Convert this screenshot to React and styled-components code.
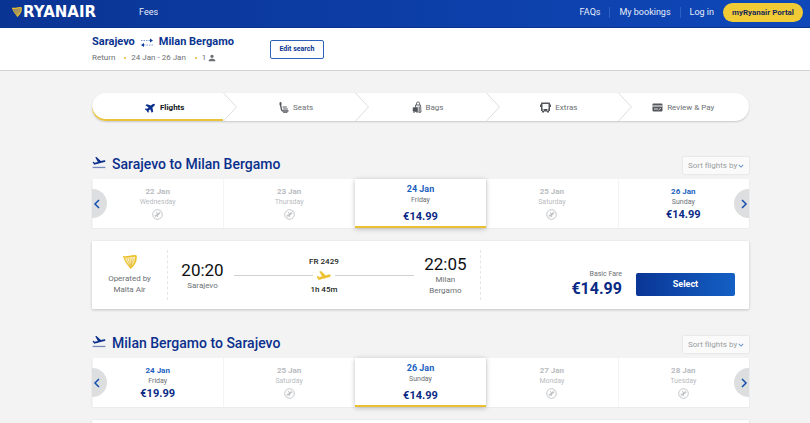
import React from "react";
import styled, { createGlobalStyle } from "styled-components";
import { MdKeyboardArrowDown, MdPerson } from "react-icons/md";
import { FaPlane } from "react-icons/fa";

const outboundDays = [
  { date: "22 Jan", weekday: "Wednesday" },
  { date: "23 Jan", weekday: "Thursday" },
  { date: "24 Jan", weekday: "Friday", price: "€14.99", selected: true },
  { date: "25 Jan", weekday: "Saturday" },
  { date: "26 Jan", weekday: "Sunday", price: "€14.99" },
];

const returnDays = [
  { date: "24 Jan", weekday: "Friday", price: "€19.99" },
  { date: "25 Jan", weekday: "Saturday" },
  { date: "26 Jan", weekday: "Sunday", price: "€14.99", selected: true },
  { date: "27 Jan", weekday: "Monday" },
  { date: "28 Jan", weekday: "Tuesday" },
];

const planePath =
  "M22.070 9.640c-.21-.8-1.040-1.280-1.840-1.060L14.920 10l-6.900-6.430-1.930.51 4.140 7.170-4.970 1.330-1.970-1.540-1.450.39 2.590 4.490s7.120-1.900 16.570-4.430c.81-.23 1.280-1.050 1.070-1.850z";

const steps = [
  { label: "Flights", icon: <TiltedPlane size={11} /> },
  { label: "Seats", icon: <SeatIcon /> },
  { label: "Bags", icon: <BagIcon /> },
  { label: "Extras", icon: <BusIcon /> },
  { label: "Review & Pay", icon: <CardIcon /> },
];

function TiltedPlane({ size }) {
  return (
    <svg width={size} height={size} viewBox="0 0 24 24">
      <g transform="rotate(-40 12 12)">
        <FaPlane size={24} />
      </g>
    </svg>
  );
}

function HarpIcon({ size, light }) {
  return (
    <svg width={size} height={size} viewBox="0 0 26 26" fill="none">
      <path d="M2 4c6 1 15-3 22-1 1 8-4 16-10 21C10 18 4 11 2 4z" fill={light ? "#fbeeb8" : "#8d8a72"} />
      <path
        d="M1 3c6 3 15-3 23-1 1 9-4 17-10 22"
        stroke="#edc02c"
        strokeWidth="3"
        strokeLinecap="round"
      />
      <path d="M2 5c2 7 7 13 12 19" stroke="#edc02c" strokeWidth="2.4" />
      <path d="M7 6l7 16M12 5l2 15M17 5l-2 15M21 6l-6 14" stroke="#dfb227" strokeWidth="1.1" />
    </svg>
  );
}

function SwapIcon() {
  return (
    <svg width="14" height="9" viewBox="0 0 28 18" fill="none" stroke="#5b80c8" strokeWidth="1.6">
      <path d="M2 5h18" strokeDasharray="3 2" />
      <path d="M8 14h18" strokeDasharray="3 2" />
      <path d="M20 1l6 4-6 4zM8 10l-6 4 6 4z" fill="#0a3a9c" stroke="none" />
    </svg>
  );
}

function TakeoffIcon() {
  return (
    <svg width="14" height="14" viewBox="1 2 22 22" fill="currentColor">
      <path d={planePath} />
      <path d="M2 19h20v2H2z" opacity="0.55" />
    </svg>
  );
}

function SeatIcon() {
  return (
    <svg width="10" height="11" viewBox="0 0 20 22" fill="none" stroke="currentColor" strokeLinecap="round">
      <path d="M3 2v3" strokeWidth="4" />
      <path d="M3 6l2 9c.4 2 1 3 3 3h10" strokeWidth="2.600" />
      <path d="M8 10h7M9 14h8" strokeWidth="2" />
      <path d="M9 21h7" strokeWidth="1.600" />
    </svg>
  );
}

function BagIcon() {
  return (
    <svg width="10" height="12" viewBox="0 0 20 24" fill="none" stroke="currentColor">
      <path d="M9 8V4c0-3 6-3 6 0v4" strokeWidth="1.600" />
      <path d="M7 8h10l1 14H8z" strokeWidth="1.800" fill="#fff" />
      <rect x="2" y="13" width="9" height="8" rx="1" fill="currentColor" />
      <path d="M12 11v10M15 11v10" strokeWidth="1.400" />
      <path d="M4 22v2M16 22v2" strokeWidth="2" />
    </svg>
  );
}

function BusIcon() {
  return (
    <svg width="11" height="11" viewBox="0 0 22 22" fill="currentColor">
      <path
        fillRule="evenodd"
        d="M4 1h14c1.500 0 2 1 2 2v15h-2v3h-4v-2H8v2H4v-3H2V3c0-1 .5-2 2-2zM5 4v10h12V4z"
      />
      <path d="M0 5h2v5H0zM20 5h2v5h-2z" />
      <path d="M5 15h3v2H5zM14 15h3v2h-3z" fill="#fff" />
    </svg>
  );
}

function CardIcon() {
  return (
    <svg width="11" height="9" viewBox="0 0 22 18">
      <rect x="1" y="1" width="20" height="16" rx="2" fill="currentColor" />
      <path d="M1 6h20" stroke="#fff" strokeWidth="2" />
      <path d="M4 12h8" stroke="#fff" strokeWidth="1.600" />
      <path d="M13 14l5-4" stroke="#fff" strokeWidth="1.400" />
    </svg>
  );
}

function NoFlightIcon() {
  return (
    <svg width="11" height="11" viewBox="0 0 22 22" fill="none" stroke="#b4b7ba">
      <circle cx="11" cy="11" r="9.600" strokeWidth="1.600" />
      <path d="M6 13l10-4M9 7l3 4-1 4M7 16l8-10" strokeWidth="1.800" strokeLinecap="round" />
    </svg>
  );
}

function PlaneIcon() {
  return (
    <svg width="14" height="9" viewBox="2 3 21 13.500">
      <path d={planePath} fill="#ecc12f" stroke="#ecc12f" />
    </svg>
  );
}

function ArrowIcon({ flip }) {
  return (
    <svg width="8" height="12" viewBox="0 0 8 12" fill="none" stroke="#1450b0" strokeWidth="1.500">
      <path d={flip ? "M2 2l4 4-4 4" : "M6 2L2 6l4 4"} />
    </svg>
  );
}

function DayPicker({ days }) {
  return (
    <Days>
      {days.map((day) => (
        <Day key={day.date} $selected={day.selected} disabled={!day.price}>
          <DayDate>{day.date}</DayDate>
          <Weekday>{day.weekday}</Weekday>
          <DayFare>{day.price || <NoFlightIcon />}</DayFare>
        </Day>
      ))}
      <Pager aria-label="Earlier dates">
        <ArrowIcon />
      </Pager>
      <Pager $right aria-label="Later dates">
        <ArrowIcon flip />
      </Pager>
    </Days>
  );
}

function Journey({ title, days }) {
  return (
    <section>
      <JourneyHeader>
        <TakeoffIcon />
        <h2>{title}</h2>
        <Sort>
          <select aria-label="Sort flights by" defaultValue="">
            <option value="">Sort flights by</option>
          </select>
          <MdKeyboardArrowDown size={10} />
        </Sort>
      </JourneyHeader>
      <DayPicker days={days} />
    </section>
  );
}

function App() {
  return (
    <Page>
      <GlobalStyle />
      <TopBar>
        <Logo href="#">
          <HarpIcon size={10} />
          RYANAIR
        </Logo>
        <NavLink href="#">Fees</NavLink>
        <UserNav>
          <NavLink href="#">FAQs</NavLink>
          <NavLink href="#">My bookings</NavLink>
          <NavLink href="#">Log in</NavLink>
        </UserNav>
        <PortalButton>myRyanair Portal</PortalButton>
      </TopBar>
      <TripBar>
        <div>
          <TripTitle>
            Sarajevo <SwapIcon /> Milan Bergamo
          </TripTitle>
          <TripDetails>
            <li>Return</li>
            <li>24 Jan - 26 Jan</li>
            <li>
              1 <MdPerson size={10} />
            </li>
          </TripDetails>
        </div>
        <EditButton>Edit search</EditButton>
      </TripBar>
      <Main>
        <Steps>
          {steps.map((step, i) => (
            <Step key={step.label} $active={i === 0}>
              {step.icon}
              {step.label}
              {i < steps.length - 1 && (
                <StepArrow viewBox="0 0 14 28" fill="#fff" stroke="#dedede">
                  <path d="M0.500 0L13.500 14L0.500 28" />
                </StepArrow>
              )}
            </Step>
          ))}
        </Steps>
        <Journey title="Sarajevo to Milan Bergamo" days={outboundDays} />
        <Flight>
          <Operator>
            <HarpIcon size={14} light />
            <span>
              Operated by
              <br />
              Malta Air
            </span>
          </Operator>
          <Route>
            <Stop>
              <time>20:20</time>
              Sarajevo
            </Stop>
            <Leg>
              <span>FR 2429</span>
              <LegLine>
                <PlaneIcon />
              </LegLine>
              <span>1h 45m</span>
            </Leg>
            <Stop>
              <time>22:05</time>
              Milan Bergamo
            </Stop>
          </Route>
          <Fare>
            <FarePrice>
              Basic Fare
              <strong>€14.99</strong>
            </FarePrice>
            <SelectButton>Select</SelectButton>
          </Fare>
        </Flight>
        <Journey title="Milan Bergamo to Sarajevo" days={returnDays} />
        <NextCard />
      </Main>
    </Page>
  );
}

const GlobalStyle = createGlobalStyle`
  * {
    box-sizing: border-box;
  }
  body {
    margin: 0;
    background: #f3f3f3;
    color: #6c7074;
    font-family: Roboto, "Liberation Sans", sans-serif;
    font-size: 8px;
    line-height: 11px;
  }
  h1, h2, ul, ol {
    margin: 0;
    padding: 0;
    list-style: none;
  }
  button, select {
    font-family: inherit;
    border: 0;
    padding: 0;
    cursor: pointer;
  }
  svg {
    flex-shrink: 0;
  }
`;

const Page = styled.div`
  display: flex;
  flex-direction: column;
  min-height: 100vh;
`;

const TopBar = styled.header`
  display: flex;
  align-items: center;
  height: 28px;
  padding: 0 7px 3px 12px;
  background: linear-gradient(90deg, #0a3494, #0f48b9);
  border-bottom: 1px solid #0a3390;
`;

const Logo = styled.a`
  display: flex;
  align-items: center;
  gap: 1px;
  width: 127px;
  color: #fff;
  font-family: "DejaVu Sans", sans-serif;
  font-size: 15px;
  font-weight: 700;
  text-decoration: none;
`;

const NavLink = styled.a`
  color: #e6edfb;
  font-size: 9px;
  text-decoration: none;
`;

const UserNav = styled.nav`
  display: flex;
  margin-left: auto;

  a {
    padding: 0 9px;
  }
  a + a {
    border-left: 1px solid #2c5fc4;
  }
`;

const PortalButton = styled.button`
  height: 19px;
  width: 80px;
  border-radius: 10px;
  background: #f1cb35;
  color: #17295c;
  font-size: 8px;
  font-weight: 700;
`;

const TripBar = styled.div`
  display: flex;
  align-items: center;
  gap: 36px;
  height: 43px;
  padding-left: 92px;
  background: #fff;
  border-bottom: 1px solid #d2d2d2;
`;

const TripTitle = styled.h1`
  display: flex;
  align-items: center;
  gap: 5px;
  color: #0a348f;
  font-size: 11px;
  line-height: 14px;
  font-weight: 700;
`;

const TripDetails = styled.ul`
  display: flex;
  padding-top: 3px;

  li {
    display: flex;
    align-items: center;
  }
  li + li::before {
    content: "";
    width: 2px;
    height: 2px;
    margin: 0 5px 0 9px;
    border-radius: 50%;
    background: #e5bb2c;
  }
  svg {
    margin-left: 1px;
  }
`;

const EditButton = styled.button`
  width: 54px;
  height: 19px;
  border: 1px solid #2e62b8;
  border-radius: 2px;
  background: #fff;
  color: #0a348f;
  font-size: 7px;
  font-weight: 700;
`;

const Main = styled.main`
  flex: 1;
  display: flex;
  flex-direction: column;
  padding: 22px 61px 0 92px;
`;

const Steps = styled.ol`
  display: grid;
  grid-template-columns: repeat(5, 1fr);
  height: 28px;
  margin-bottom: 35px;
  border-radius: 14px;
  background: #fff;
  box-shadow: 0 1px 2px rgba(0, 0, 0, 0.18);
`;

const Step = styled.li`
  position: relative;
  display: flex;
  align-items: center;
  justify-content: center;
  gap: 4px;
  padding-left: 14px;
  color: ${(props) => (props.$active ? "#14171c" : "#6c7074")};
  font-weight: ${(props) => (props.$active ? 700 : 400)};
  border-radius: ${(props) => (props.$active ? "14px 0 0 14px" : 0)};
  box-shadow: ${(props) => (props.$active ? "inset 0 -2px 0 #eac33c" : "none")};

  > svg:first-child {
    color: ${(props) => (props.$active ? "#0a2f8c" : "#53575c")};
  }
  &:last-child {
    padding-left: 0;
  }
`;

const StepArrow = styled.svg`
  position: absolute;
  top: 0;
  left: 100%;
  width: 14px;
  height: 28px;
`;

const JourneyHeader = styled.header`
  display: flex;
  align-items: flex-start;
  gap: 6px;
  height: 18px;
  margin-bottom: 5px;
  color: #0a2f8c;

  h2 {
    font-size: 14px;
    line-height: 16px;
    font-weight: 500;
  }
`;

const Sort = styled.div`
  position: relative;
  align-self: flex-end;
  margin-left: auto;
  height: 17px;

  select {
    appearance: none;
    width: 66px;
    height: 17px;
    padding-left: 5px;
    border-radius: 1px;
    background: #fafafa;
    box-shadow: 0 0 2px rgba(0, 0, 0, 0.16);
    color: #9a9da1;
    font-size: 8px;
  }
  svg {
    position: absolute;
    top: 4px;
    right: 3px;
    color: #5f8fc8;
    pointer-events: none;
  }
`;

const Days = styled.div`
  position: relative;
  display: grid;
  grid-template-columns: repeat(5, 1fr);
  height: 48px;
  margin-bottom: 14px;
  background: #fff;
  box-shadow: 0 1px 1px rgba(0, 0, 0, 0.18);
`;

const DayDate = styled.span`
  font-size: 8px;
  line-height: 10px;
  font-weight: 700;
`;

const Weekday = styled.span`
  font-size: 7px;
  line-height: 10px;
`;

const DayFare = styled.span`
  display: flex;
  align-items: center;
  height: 14px;
  color: #0a2a85;
  font-size: 11px;
  font-weight: 700;
`;

const Day = styled.button`
  display: flex;
  flex-direction: column;
  align-items: center;
  padding-top: 8px;
  background: #fff;
  box-shadow: inset 1px 0 0 #f4f4f4;
  color: #6c7074;

  ${DayDate} {
    color: #1a5fc0;
  }
  &:disabled,
  &:disabled ${DayDate} {
    color: #b9bcbf;
    cursor: default;
  }
  ${(props) =>
    props.$selected &&
    `
    z-index: 1;
    height: 49px;
    padding-top: 5px;
    border-bottom: 2px solid #eac033;
    box-shadow: 0 1px 5px rgba(0, 0, 0, 0.25);

    ${DayDate} {
      font-size: 9px;
      line-height: 11px;
    }
    ${DayFare} {
      margin-top: 4px;
    }
  `}
`;

const Pager = styled.button`
  position: absolute;
  top: 10px;
  ${(props) => (props.$right ? "right: 0;" : "left: 0;")}
  display: flex;
  align-items: center;
  justify-content: ${(props) => (props.$right ? "flex-end" : "flex-start")};
  width: 15px;
  height: 29px;
  padding: 0 1px;
  border-radius: ${(props) => (props.$right ? "15px 0 0 15px" : "0 15px 15px 0")};
  background: #dcdee0;
`;

const Card = styled.article`
  background: #fff;
  border-radius: 1px;
  box-shadow: 0 1px 3px rgba(0, 0, 0, 0.2);
`;

const Flight = styled(Card)`
  display: grid;
  grid-template-columns: 76px 7fr 6fr;
  min-height: 68px;
  margin-bottom: 26px;
  padding: 9px 0;
`;

const NextCard = styled(Card)`
  flex: 1;
`;

const Operator = styled.div`
  display: flex;
  flex-direction: column;
  align-items: center;
  justify-content: center;
  gap: 4px;
  border-right: 1px dashed #e6e6e6;
  text-align: center;
`;

const Route = styled.div`
  display: flex;
  align-items: center;
  gap: 10px;
  padding: 0 13px;
  border-right: 1px dashed #e6e6e6;
`;

const Stop = styled.div`
  width: 43px;
  text-align: center;

  time {
    display: block;
    color: #0d0f12;
    font-size: 17px;
    line-height: 20px;
  }
`;

const Leg = styled.div`
  flex: 1;
  display: flex;
  flex-direction: column;
  gap: 4px;
  color: #1c1f24;
  font-weight: 500;
  text-align: center;
`;

const LegLine = styled.div`
  display: flex;
  align-items: center;
  gap: 4px;

  &::before,
  &::after {
    content: "";
    flex: 1;
    height: 1px;
    background: #cfd1d3;
  }
`;

const Fare = styled.div`
  display: flex;
  align-items: center;
  justify-content: flex-end;
  gap: 14px;
  padding: 18px 14px 0 0;
`;

const FarePrice = styled.div`
  font-size: 7px;
  line-height: 9px;
  text-align: right;

  strong {
    display: block;
    color: #0a2a85;
    font-size: 16px;
    line-height: 20px;
    font-weight: 700;
  }
`;

const SelectButton = styled.button`
  width: 99px;
  height: 23px;
  border-radius: 2px;
  background: linear-gradient(90deg, #0a3696, #1460c4);
  color: #fff;
  font-size: 9px;
  font-weight: 700;
`;

export default App;
